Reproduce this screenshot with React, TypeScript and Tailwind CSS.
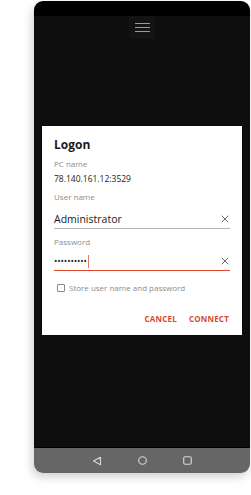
import React from "react";

export default function App() {
  return (
    <div className="w-[251px] h-[495px] bg-white overflow-hidden" style={{ fontFamily: '"Open Sans", "Noto Sans", sans-serif' }}>
      <div className="ml-[34px] mt-[1px] w-[216px] h-[472px] rounded-[9px] overflow-hidden flex flex-col shadow-[-2px_4px_10px_rgba(0,0,0,0.18)]">
        <div className="h-[15px] bg-black shrink-0" />
        <div className="flex-1 bg-[#0e0e0e] flex flex-col">
          <div className="flex justify-center">
            <div className="w-[26px] h-[23px] bg-[#131313] flex flex-col items-center justify-center gap-[3px]">
              <div className="w-[15px] h-[1px] bg-[#9a9a9a]" />
              <div className="w-[15px] h-[1px] bg-[#9a9a9a]" />
              <div className="w-[15px] h-[1px] bg-[#9a9a9a]" />
            </div>
          </div>
          <div className="mt-[87px] mx-[8px] h-[209px] bg-white shadow-[0_0_1px_rgba(0,0,0,0.6)] px-[12px] pt-[10px] flex flex-col">
            <div className="h-[18px] text-[12px] leading-[18px] font-bold text-[#1a1a1a]">Logon</div>
            <div className="mt-[4px] h-[12px] text-[8px] leading-[12px] text-[#8c8c8c]">PC name</div>
            <div className="mt-[2px] h-[14px] text-[8.5px] leading-[14px] text-[#222]">78.140.161.12:3529</div>
            <div className="mt-[5px] h-[12px] text-[8px] leading-[12px] text-[#8c8c8c]">User name</div>
            <div className="mt-[8px] h-[16px] flex items-center justify-between border-b border-[#b5b5b5] pb-[1px] box-content">
              <span className="text-[10.5px] leading-[16px] text-[#1a1a1a]">Administrator</span>
              <svg width="8" height="8" viewBox="0 0 8 8" className="mr-[1px]">
                <path d="M0.7 0.7L7.3 7.3M7.3 0.7L0.7 7.3" stroke="#555" strokeWidth="0.9" />
              </svg>
            </div>
            <div className="mt-[7px] h-[12px] text-[8px] leading-[12px] text-[#8c8c8c]">Password</div>
            <div className="mt-[5px] h-[16px] flex items-center justify-between border-b border-[#e0472a] pb-[1px] box-content">
              <span className="flex items-center">
                <span className="text-[9px] leading-[16px] tracking-[-0.1px] text-[#1a1a1a]">••••••••••</span>
                <span className="w-[1px] h-[13px] bg-[#e57b63] ml-[1px]" />
              </span>
              <svg width="8" height="8" viewBox="0 0 8 8" className="mr-[1px]">
                <path d="M0.7 0.7L7.3 7.3M7.3 0.7L0.7 7.3" stroke="#555" strokeWidth="0.9" />
              </svg>
            </div>
            <div className="mt-[11px] flex items-center ml-[3px]">
              <div className="w-[8px] h-[8px] border border-[#8a8a8a] rounded-[1px]" />
              <span className="ml-[4px] text-[8px] leading-[12px] text-[#8c8c8c]">Store user name and password</span>
            </div>
            <div className="mt-[19px] flex justify-end gap-[12px] pr-[1px]">
              <span className="text-[8px] leading-[12px] font-bold text-[#e0472a] tracking-[0.2px]">CANCEL</span>
              <span className="text-[8px] leading-[12px] font-bold text-[#e0472a] tracking-[0.2px]">CONNECT</span>
            </div>
          </div>
        </div>
        <div className="h-[26px] shrink-0 bg-[#666666] border-t border-black flex items-center justify-center gap-[36px]">
          <svg width="10" height="10" viewBox="0 0 10 10">
            <path d="M8.5 1.2L1.5 5L8.5 8.8Z" fill="none" stroke="#d8d8d8" strokeWidth="1.1" strokeLinejoin="round" />
          </svg>
          <svg width="9" height="9" viewBox="0 0 9 9">
            <circle cx="4.5" cy="4.5" r="3.8" fill="none" stroke="#d8d8d8" strokeWidth="1.1" />
          </svg>
          <svg width="9" height="9" viewBox="0 0 9 9">
            <rect x="0.7" y="0.7" width="7.6" height="7.6" rx="1.5" fill="none" stroke="#d8d8d8" strokeWidth="1.1" />
          </svg>
        </div>
      </div>
    </div>
  );
}
